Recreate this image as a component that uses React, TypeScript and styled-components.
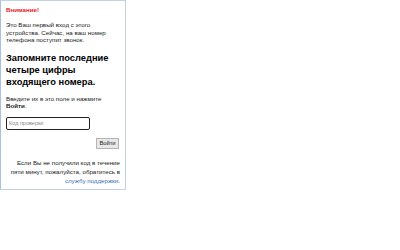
import React from "react";
import styled, { createGlobalStyle } from "styled-components";

const Global = createGlobalStyle`
  html, body { margin: 0; padding: 0; background: #fff; }
  body { font-family: "Liberation Sans", Arial, sans-serif; color: #222; }
`;

const Card = styled.div`
  box-sizing: border-box;
  width: 126px;
  height: 190px;
  border: 1px solid #c3d2e2;
  border-left-color: #a9c1dc;
  padding: 5px 5px 0 5px;
  display: flex;
  flex-direction: column;
`;

const Warning = styled.div`
  color: #e8202a;
  font-weight: bold;
  font-size: 6.2px;
  line-height: 8px;
`;

const Text = styled.p<{ $align?: string; $mt?: number; $lh?: number }>`
  margin: ${(p) => p.$mt ?? 0}px 0 0;
  font-size: 6.2px;
  line-height: ${(p) => p.$lh ?? 7.5}px;
  text-align: ${(p) => p.$align ?? "left"};
`;

const Heading = styled.h2`
  margin: 8px 0 0;
  font-size: 9.3px;
  line-height: 12px;
  font-weight: bold;
  color: #000;
`;

const Input = styled.input`
  box-sizing: border-box;
  margin-top: 7px;
  width: 84px;
  height: 13px;
  border: 1px solid #222;
  border-radius: 2px;
  padding: 0 2px;
  font-family: inherit;
  font-size: 5.5px;
  outline: none;
  &::placeholder { color: #888; }
`;

const ButtonRow = styled.div`
  display: flex;
  justify-content: flex-end;
  margin-top: 8px;
  padding-right: 1px;
`;

const Button = styled.button`
  box-sizing: border-box;
  height: 11px;
  width: 23px;
  padding: 0;
  border: 1px solid #b4b4b4;
  background: #e8e8e8;
  font-family: inherit;
  font-size: 5.8px;
  color: #222;
`;

const Link = styled.a`
  color: #3a6fc4;
  text-decoration: none;
`;

export default function App() {
  return (
    <>
      <Global />
      <Card>
        <Warning>Внимание!</Warning>
        <Text $mt={7}>
          Это Ваш первый вход с этого устройства. Сейчас, на ваш номер телефона поступит звонок.
        </Text>
        <Heading>Запомните последние четыре цифры входящего номера.</Heading>
        <Text $mt={7}>
          Введите их в это поле и нажмите <b>Войти</b>.
        </Text>
        <Input placeholder="Код проверки" />
        <ButtonRow>
          <Button>Войти</Button>
        </ButtonRow>
        <Text $align="right" $mt={9} $lh={9}>
          Если Вы не получили код в течение пяти минут, пожалуйста, обратитесь в <Link href="#">службу поддержки</Link>.
        </Text>
      </Card>
    </>
  );
}
